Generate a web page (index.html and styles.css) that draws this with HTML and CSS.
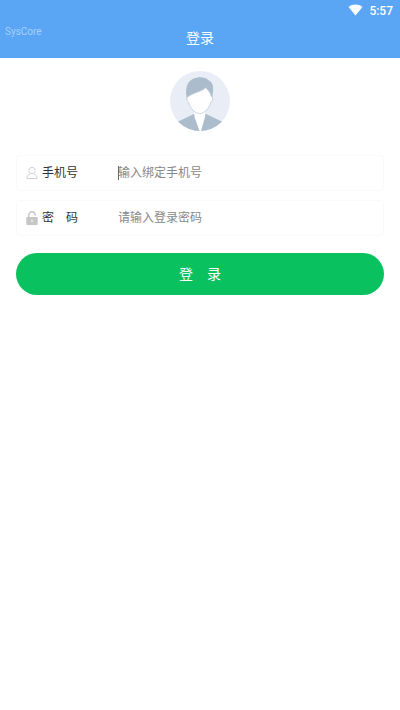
FILE: index.html
```html
<!DOCTYPE html>
<html lang="zh-CN">
<head>
<meta charset="utf-8">
<meta name="viewport" content="width=device-width, initial-scale=1">
<title>登录</title>
<link rel="stylesheet" href="styles.css">
</head>
<body>
<header class="header">
  <div class="status">
    <svg class="wifi" viewBox="0 0 16 12" aria-hidden="true"><path d="M.6 2.8C5-.6 11-.6 15.400 2.800L8 11.800z"/></svg>
    <time>5:57</time>
  </div>
  <span class="brand">SysCore</span>
  <h1 class="title">登录</h1>
</header>
<main class="main">
  <svg class="avatar" viewBox="0 0 60 60" aria-hidden="true">
    <defs><clipPath id="disc"><circle cx="30" cy="30" r="30"/></clipPath></defs>
    <g clip-path="url(#disc)">
      <path class="disc" d="M0 0h60v60H0z"/>
      <path class="shade" d="M7 51 24 43 30 46 36 43 53 51V60H7z"/>
      <path class="light" d="M24.300 40h11L35 46 31 60h-1.500L24.500 46z"/>
      <path class="shade" d="M17.500 30C15.500 23 15.500 17 18 12.500 21 7.500 27 5.500 33 6.500c3 .5 4.500 1.500 5.500 2.800 4 1.700 5.200 6 4.500 11.200L41.800 30z"/>
      <path class="face" d="M18.500 25.500c-2.200-.8-2.200 5 .2 5.800C20 37 25 42.500 29.700 42.500S39.500 37 40.700 31.300c2.400-.8 2.600-6.600.5-5.800C41 21.500 38 20 36 16.500 32 20.500 24 21.500 19 25z"/>
    </g>
  </svg>
  <form class="form">
    <div class="field">
      <svg class="icon line" viewBox="0 0 12 14" aria-hidden="true"><circle cx="6" cy="4.500" r="3.200"/><path d="M3.800 8.300C1.800 9 .8 10.300.8 12.500h10.400c0-2.200-1-3.500-3-4.200"/></svg>
      <label for="phone">手机号</label>
      <div class="entry focused"><input id="phone" type="tel" placeholder="输入绑定手机号"></div>
    </div>
    <div class="field">
      <svg class="icon lock" viewBox="0 0 12 14" aria-hidden="true"><path class="shackle" d="M2.800 7V4a3.200 3.200 0 0 1 6.400 0v.8"/><rect x=".3" y="6" width="11.400" height="8" rx="1"/><path class="hole" d="M6 8.500v2.500"/></svg>
      <label for="password">密　码</label>
      <div class="entry"><input id="password" type="password" placeholder="请输入登录密码"></div>
    </div>
    <button class="submit" type="submit">登　录</button>
  </form>
</main>
</body>
</html>
```
FILE: styles.css
```css
* {
  box-sizing: border-box;
}

body {
  margin: 0;
  background: #fff;
  color: #333;
  font-family: Roboto, "Noto Sans CJK SC", sans-serif;
  font-size: 12px;
}

.header {
  position: relative;
  padding-bottom: 4px;
  background: #5aa6f5;
  color: #fff;
}

.status {
  display: flex;
  justify-content: flex-end;
  align-items: center;
  gap: 6px;
  height: 22px;
  padding-right: 7px;
  font-size: 12px;
  font-weight: 500;
}

.wifi {
  width: 15px;
  height: 12px;
  margin-bottom: 2px;
  fill: #fff;
}

.brand {
  position: absolute;
  left: 5px;
  top: 24px;
  color: #a6cffa;
  font-size: 10px;
  line-height: 16px;
}

.title {
  margin: 0;
  font-size: 14px;
  font-weight: 400;
  line-height: 32px;
  text-align: center;
}

.main {
  padding: 13px 16px;
}

.avatar {
  display: block;
  width: 60px;
  height: 60px;
  margin: 0 auto 24px;
}

.disc {
  fill: #e9edf5;
}

.shade {
  fill: #abbccd;
}

.light {
  fill: #fff;
}

.face {
  fill: #fff;
  stroke: #b7c5d3;
  stroke-width: 0.7;
}

.form {
  display: flex;
  flex-direction: column;
}

.field {
  display: flex;
  align-items: center;
  height: 36px;
  margin-bottom: 9px;
  padding: 0 9px;
  border: 1px solid #fafafa;
  border-radius: 4px;
}

.icon {
  width: 12px;
  height: 14px;
  margin-right: 4px;
}

.line {
  fill: none;
  stroke: #d2d2d2;
}

.lock {
  fill: #c6c6c6;
}

.shackle {
  fill: none;
  stroke: #c6c6c6;
  stroke-width: 1.4;
}

.hole {
  stroke: #fff;
}

.field label {
  width: 76px;
  line-height: 20px;
}

.entry {
  position: relative;
  flex: 1;
}

.focused::before {
  content: "";
  position: absolute;
  left: 0;
  top: 3px;
  width: 1px;
  height: 14px;
  background: #666;
}

.entry input {
  display: block;
  width: 100%;
  height: 20px;
  padding: 0;
  border: 0;
  outline: 0;
  background: transparent;
  color: #333;
  font: inherit;
}

.entry input::placeholder {
  color: #888;
  opacity: 1;
}

.submit {
  height: 42px;
  margin-top: 8px;
  padding: 0 0 2px;
  border: 0;
  border-radius: 21px;
  background: #0ac160;
  color: #fff;
  font-family: inherit;
  font-size: 14px;
}
```
